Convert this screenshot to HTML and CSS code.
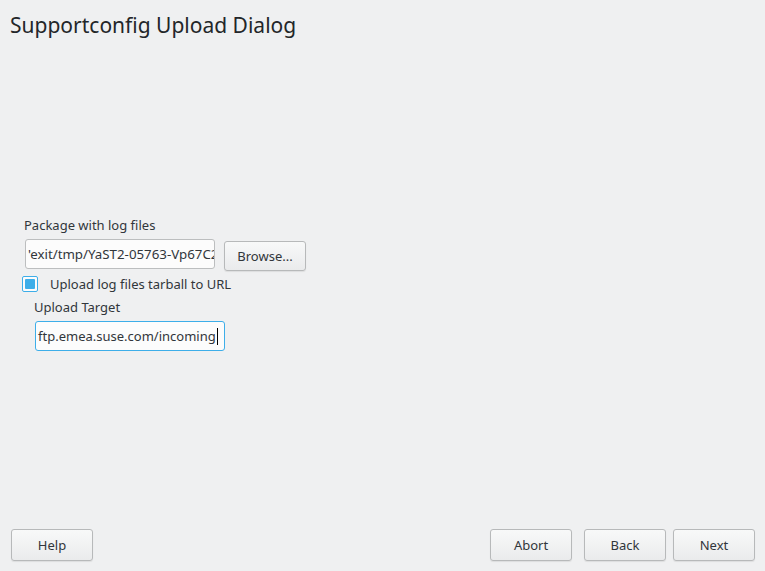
FILE: index.html
```html
<!DOCTYPE html>
<html>
<head>
<meta charset="utf-8">
<link rel="stylesheet" href="styles.css">
</head>
<body>
<div class="dialog">
  <h1 class="title">Supportconfig Upload Dialog</h1>
  <div class="content">
    <div class="form">
      <div class="label pkg-label">Package with log files</div>
      <div class="row">
        <div class="input pkg-input"><span class="scroll">'exit/tmp/YaST2-05763-Vp67C2</span></div>
        <button class="btn browse">Browse...</button>
      </div>
      <label class="check-row">
        <span class="checkbox"><span class="check-fill"></span></span>
        <span class="check-text">Upload log files tarball to URL</span>
      </label>
      <div class="sub">
        <div class="label target-label">Upload Target</div>
        <div class="input target-input focused"><span>ftp.emea.suse.com/incoming</span><span class="caret"></span></div>
      </div>
    </div>
  </div>
  <div class="footer">
    <button class="btn">Help</button>
    <div class="spacer"></div>
    <button class="btn">Abort</button>
    <button class="btn back">Back</button>
    <button class="btn">Next</button>
  </div>
</div>
</body>
</html>
```

FILE: styles.css
```css
html, body {
  margin: 0;
  padding: 0;
  background: #eff0f1;
}
body {
  font-family: "Noto Sans", "DejaVu Sans", sans-serif;
  color: #31363b;
  font-size: 13px;
}
.dialog {
  width: 765px;
  height: 571px;
  display: flex;
  flex-direction: column;
  box-sizing: border-box;
}
.title {
  margin: 0;
  padding: 10px 0 0 10px;
  font-weight: normal;
  font-size: 21px;
  line-height: 30px;
  color: #232629;
}
.content {
  flex: 1;
  display: flex;
  flex-direction: column;
  justify-content: center;
}
.form {
  padding-left: 24px;
  margin-top: -2px;
}
.label {
  line-height: 18px;
}
.pkg-label {
  margin-bottom: 5px;
}
.row {
  display: flex;
  align-items: flex-start;
  gap: 9px;
  padding-left: 1px;
}
.input {
  box-sizing: border-box;
  height: 30px;
  background: #fcfcfc;
  border: 1px solid #bcbebf;
  border-radius: 3px;
  display: flex;
  align-items: center;
  padding: 0 3px;
  overflow: hidden;
  white-space: nowrap;
  color: #31363b;
}
.pkg-input {
  width: 190px;
  padding-left: 2px;
  font-size: 13.3px;
}
.scroll {
  display: block;
}
.btn {
  box-sizing: border-box;
  width: 82px;
  height: 32px;
  font-family: inherit;
  font-size: 13px;
  color: #31363b;
  background: linear-gradient(#f8f9f9, #eaebec);
  border: 1px solid #b7b9ba;
  border-radius: 3px;
  box-shadow: 0 1px 1px rgba(0,0,0,0.08);
  padding: 0;
}
.browse {
  margin-top: 2px;
  height: 30px;
}
.check-row {
  display: flex;
  align-items: center;
  margin-left: -2px;
  margin-top: 4px;
  height: 18px;
}
.checkbox {
  box-sizing: border-box;
  width: 16px;
  height: 16px;
  border: 1px solid #3daee9;
  border-radius: 2px;
  background: #fcfcfc;
  display: flex;
  align-items: center;
  justify-content: center;
}
.check-fill {
  width: 10px;
  height: 10px;
  background: #3daee9;
  border-radius: 1px;
}
.check-text {
  margin-left: 12px;
}
.sub {
  padding-left: 10px;
  margin-top: 5px;
}
.target-label {
  margin-bottom: 5px;
}
.target-input {
  width: 190px;
  margin-left: 1px;
  padding-left: 2px;
}
.focused {
  border-color: #3daee9;
}
.caret {
  display: inline-block;
  width: 1px;
  height: 17px;
  background: #000;
  margin-left: 1px;
}
.footer {
  display: flex;
  padding: 0 10px 10px 11px;
  gap: 12px;
}
.spacer {
  flex: 1;
}
.back {
  margin-right: -5px;
}
```
